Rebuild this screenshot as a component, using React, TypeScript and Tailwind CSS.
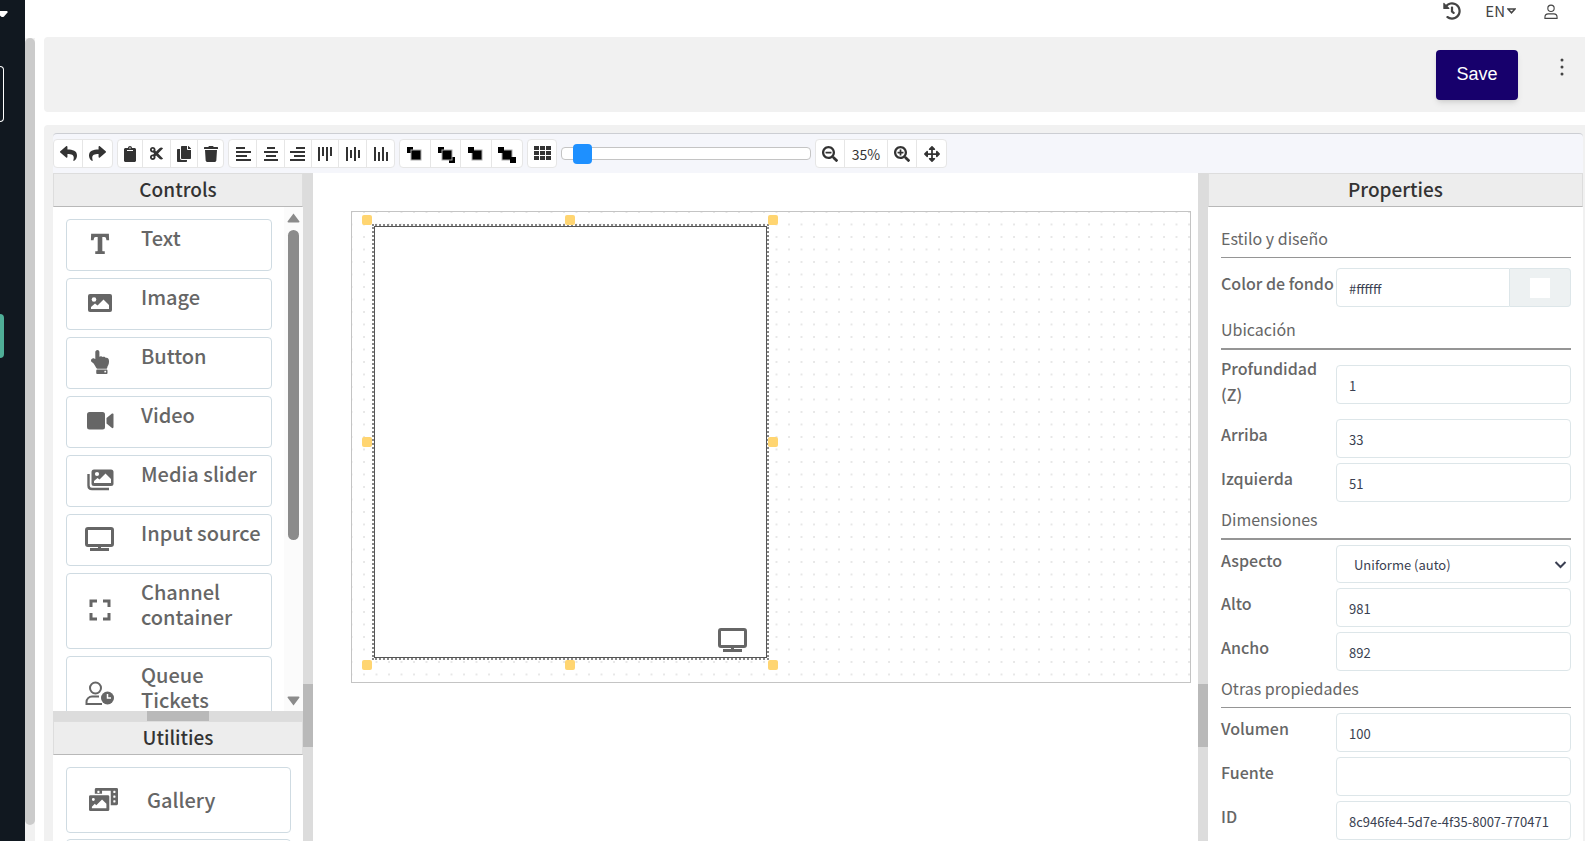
import type { ReactNode } from 'react'
import {
  FaReply, FaShare, FaClipboard, FaCut, FaCopy, FaTrash, FaSearchMinus, FaSearchPlus,
  FaArrowsAlt, FaHandPointUp, FaPhotoVideo, FaHistory,
} from 'react-icons/fa'
import { BsFonts } from 'react-icons/bs'
import { MdFullscreen } from 'react-icons/md'

interface Tool {
  label: string
  icon: ReactNode
  width: string
}

// Four bars, rotated for the vertical variants
function Bars({ lines, vertical }: { lines: [number, number][]; vertical?: boolean }) {
  return (
    <svg width="16" height="16" viewBox="0 0 16 16" fill="currentColor">
      {lines.map(([start, length], i) =>
        vertical ? (
          <rect key={i} x={1 + i * 4} y={start} width="2" height={length} />
        ) : (
          <rect key={i} x={start} y={1 + i * 4} width={length} height="2" />
        )
      )}
    </svg>
  )
}

function Layers({ squares }: { squares: [number, number, number][] }) {
  return (
    <svg width="20" height="18" viewBox="0 0 20 18">
      {squares.map(([x, y, size], i) => (
        <rect key={i} x={x} y={y} width={size} height={size} fill="#000" stroke="#aaa" strokeWidth={size > 6 ? 1 : 0} />
      ))}
    </svg>
  )
}

function GridIcon() {
  return (
    <svg width="17" height="15" viewBox="0 0 17 15" fill="currentColor">
      {[0, 5, 10].map((y) => [0, 6, 12].map((x) => <rect key={`${x}-${y}`} x={x} y={y} width="5" height="4" />))}
    </svg>
  )
}

function ImageIcon() {
  return (
    <svg width="24" height="18" viewBox="0 0 24 18">
      <rect width="24" height="18" rx="2" fill="currentColor" />
      <circle cx="6" cy="5.500" r="2.300" fill="#fff" />
      <path d="M3 15V13L7 9.500L9.500 11.500L15.500 5.500L21 11V15Z" fill="#fff" />
    </svg>
  )
}

function VideoIcon() {
  return (
    <svg width="27" height="18" viewBox="0 0 27 18" fill="currentColor">
      <rect width="18" height="17.500" rx="2.500" />
      <path d="M19.500 6L25 1.500Q26.500 1 26.500 2.500V15Q26.500 16.500 25 16L19.500 11.500Z" />
    </svg>
  )
}

function SlidesIcon() {
  return (
    <svg width="27" height="22" viewBox="0 0 27 22">
      <path d="M1.500 5V16.500Q1.500 20 5 20H22" fill="none" stroke="currentColor" strokeWidth="2.400" />
      <rect x="4.500" y="0.500" width="22" height="16.500" rx="2.500" fill="currentColor" />
      <circle cx="10" cy="5" r="2.100" fill="#fff" />
      <path d="M7 14V12L10.500 9L12.500 10.500L18.500 4.500L24 10V14Z" fill="#fff" />
    </svg>
  )
}

function MonitorIcon() {
  return (
    <svg width="30" height="25" viewBox="0 0 30 25" fill="none" stroke="currentColor">
      <rect x="1.500" y="1.500" width="26" height="17" rx="1.500" strokeWidth="3" />
      <path d="M14.500 19v4" strokeWidth="3" />
      <path d="M5 22.500h19" strokeWidth="3" />
    </svg>
  )
}

function QueueIcon() {
  return (
    <svg width="30" height="25" viewBox="0 0 30 25" fill="none" stroke="currentColor" strokeWidth="2">
      <circle cx="10.500" cy="7" r="5.500" />
      <path d="M14 15.500H7a5.500 5.500 0 0 0-5.500 5.500v2H17" />
      <circle cx="22.500" cy="17" r="6.500" fill="currentColor" stroke="none" />
      <path d="M22.500 13v4h3.500" stroke="#fff" strokeWidth="1.500" />
    </svg>
  )
}

const TOOL_GROUPS: Tool[][] = [
  [
    { label: 'Undo', icon: <FaReply size={17} />, width: 'w-[29px]' },
    { label: 'Redo', icon: <FaShare size={17} />, width: 'w-[29px]' },
  ],
  [
    { label: 'Paste', icon: <FaClipboard size={16} />, width: 'w-[25px]' },
    { label: 'Cut', icon: <FaCut size={15} />, width: 'w-7' },
    { label: 'Copy', icon: <FaCopy size={16} />, width: 'w-[27px]' },
    { label: 'Delete', icon: <FaTrash size={16} />, width: 'w-[25px]' },
  ],
  [
    { label: 'Align left', icon: <Bars lines={[[1, 9], [1, 15], [1, 11], [1, 15]]} />, width: 'w-7' },
    { label: 'Align center', icon: <Bars lines={[[4, 8], [1, 14], [3, 10], [1, 14]]} />, width: 'w-7' },
    { label: 'Align right', icon: <Bars lines={[[6, 9], [0, 15], [4, 11], [0, 15]]} />, width: 'w-[27px]' },
    { label: 'Align top', icon: <Bars vertical lines={[[1, 14], [1, 9], [1, 14], [1, 9]]} />, width: 'w-[27px]' },
    { label: 'Align middle', icon: <Bars vertical lines={[[1, 14], [4, 8], [1, 14], [4, 8]]} />, width: 'w-7' },
    { label: 'Align bottom', icon: <Bars vertical lines={[[1, 14], [6, 9], [1, 14], [6, 9]]} />, width: 'w-[27px]' },
  ],
  [
    { label: 'Bring to front', icon: <Layers squares={[[2, 2, 6], [6, 5, 10]]} />, width: 'w-[31px]' },
    { label: 'Bring forward', icon: <Layers squares={[[2, 2, 6], [13, 12, 6], [6, 5, 10]]} />, width: 'w-[30px]' },
    { label: 'Send to back', icon: <Layers squares={[[6, 5, 10], [2, 2, 6]]} />, width: 'w-[31px]' },
    { label: 'Send backward', icon: <Layers squares={[[5, 5, 10], [1, 2, 6], [13, 12, 6]]} />, width: 'w-[30px]' },
  ],
  [{ label: 'Toggle grid', icon: <GridIcon />, width: 'w-7' }],
]

const CONTROLS = [
  { label: 'Text', icon: <BsFonts size={30} stroke="currentColor" strokeWidth={1} /> },
  { label: 'Image', icon: <ImageIcon /> },
  { label: 'Button', icon: <FaHandPointUp size={24} /> },
  { label: 'Video', icon: <VideoIcon /> },
  { label: 'Media slider', icon: <SlidesIcon /> },
  { label: 'Input source', icon: <MonitorIcon /> },
  { label: 'Channel container', icon: <MdFullscreen size={36} />, tall: true },
  { label: 'Queue Tickets', icon: <QueueIcon />, tall: true },
]

const HANDLES = [
  '-left-[12px] -top-[11px]',
  'left-[191px] -top-[11px]',
  'left-[394px] -top-[11px]',
  '-left-[12px] top-[211px]',
  'left-[394px] top-[211px]',
  '-left-[12px] top-[434px]',
  'left-[191px] top-[434px]',
  'left-[394px] top-[434px]',
]

const FIELD =
  'h-[39px] w-full min-w-0 rounded border border-[#dde6e9] bg-white px-3 pt-[2px] text-[13px] text-[#3a3f51] outline-none'

function ToolGroup({ children }: { children: ReactNode }) {
  return (
    <div className="flex h-[29px] shrink-0 divide-x divide-[#e6e6e6] overflow-hidden rounded border border-[#e6e6e6] bg-white">
      {children}
    </div>
  )
}

function ToolButton({ label, icon, width }: Tool) {
  return (
    <button type="button" aria-label={label} className={`flex shrink-0 items-center justify-center ${width}`}>
      {icon}
    </button>
  )
}

function PanelTitle({ children }: { children: ReactNode }) {
  return (
    <h2 className="h-[34px] shrink-0 border border-[#ddd] border-b-[#b8b8b8] bg-[#ededed] text-center text-[19px] leading-[30px] font-medium text-[#333]">
      {children}
    </h2>
  )
}

function Splitter() {
  return (
    <div className="w-[10px] shrink-0 bg-[#dcdcdc] pt-[511px]">
      <div className="h-[63px] bg-[#b9b9b9]" />
    </div>
  )
}

function Section({ title, thick }: { title: string; thick?: boolean }) {
  return (
    <h3
      className={`mb-[5px] border-[#959595] pb-[7px] text-[16px] leading-6 text-[#666] ${thick ? 'border-b-2' : 'border-b'}`}
    >
      {title}
    </h3>
  )
}

function Row({ id, label, children, tall }: { id: string; label: string; children: ReactNode; tall?: boolean }) {
  return (
    <div className={`mb-[5px] flex ${tall ? 'h-[59px]' : ''}`}>
      <label
        htmlFor={id}
        className={`w-[115px] shrink-0 text-[16px] leading-[26px] font-medium text-[#666] ${tall ? '' : 'pt-[2px]'}`}
      >
        {label}
      </label>
      <div className={`flex min-w-0 flex-1 ${tall ? 'pt-[10px]' : ''}`}>{children}</div>
    </div>
  )
}

function Field({ id, label, value, tall }: { id: string; label: string; value: string; tall?: boolean }) {
  return (
    <Row id={id} label={label} tall={tall}>
      <input id={id} type="text" defaultValue={value} className={FIELD} />
    </Row>
  )
}

function Toolbar() {
  return (
    <div className="flex h-10 shrink-0 items-center gap-1 rounded-t border-t border-[#ccced3] bg-[#f5f6fb] text-[#333]">
      {TOOL_GROUPS.map((group, i) => (
        <ToolGroup key={i}>
          {group.map((tool) => (
            <ToolButton key={tool.label} {...tool} />
          ))}
        </ToolGroup>
      ))}
      <input
        type="range"
        aria-label="Zoom"
        min={0}
        max={100}
        defaultValue={5}
        className="h-[13px] w-[250px] shrink-0 appearance-none rounded border border-[#c4c4c4] bg-white [&::-webkit-slider-thumb]:h-5 [&::-webkit-slider-thumb]:w-[19px] [&::-webkit-slider-thumb]:appearance-none [&::-webkit-slider-thumb]:rounded [&::-webkit-slider-thumb]:bg-[#1e90ff]"
      />
      <ToolGroup>
        <ToolButton label="Zoom out" icon={<FaSearchMinus size={16} />} width="w-[29px]" />
        <span className="w-[43px] text-center text-[14px] leading-[28px]">35%</span>
        <ToolButton label="Zoom in" icon={<FaSearchPlus size={16} />} width="w-[29px]" />
        <ToolButton label="Move" icon={<FaArrowsAlt size={16} />} width="w-[29px]" />
      </ToolGroup>
    </div>
  )
}

function ControlsPanel() {
  return (
    <aside className="flex w-[250px] shrink-0 flex-col bg-white">
      <PanelTitle>Controls</PanelTitle>
      <div className="flex h-[504px] shrink-0 overflow-hidden">
        <div className="flex flex-1 flex-col gap-[7px] pt-3 pr-3 pl-[13px]">
          {CONTROLS.map(({ label, icon, tall }) => (
            <button
              key={label}
              type="button"
              className={`flex w-[206px] shrink-0 rounded border border-[#cfdbe2] text-left text-[#666] ${tall ? 'h-[76px]' : 'h-[52px]'}`}
            >
              <span className="flex h-full w-[66px] shrink-0 items-center justify-center pb-[2px]">{icon}</span>
              <span className="pt-[5px] pl-2 text-[20px] leading-[25px] font-medium">{label}</span>
            </button>
          ))}
        </div>
        <div className="flex w-[19px] shrink-0 flex-col items-center bg-[#fbfbfb] pt-[6px] pb-[5px] text-[#8b8b8b]">
          <svg width="13" height="10" viewBox="0 0 13 10" fill="currentColor">
            <path d="M6.500 0.500L12.500 8.500Q12.500 9.500 11.500 9.500H1.500Q0.500 9.500 0.500 8.500Z" />
          </svg>
          <div className="mt-[7px] h-[310px] w-[11px] rounded-full bg-[#8b8b8b]" />
          <svg className="mt-auto" width="13" height="10" viewBox="0 0 13 10" fill="currentColor">
            <path d="M6.500 9.500L12.500 1.500Q12.500 0.500 11.500 0.500H1.500Q0.500 0.500 0.500 1.500Z" />
          </svg>
        </div>
      </div>
      <div className="flex h-[10px] shrink-0 justify-center bg-[#dcdcdc]">
        <div className="w-[62px] bg-[#b9b9b9]" />
      </div>
      <PanelTitle>Utilities</PanelTitle>
      <div className="flex flex-col gap-[6px] pt-3 pr-3 pl-[13px]">
        <button
          type="button"
          className="flex h-[66px] shrink-0 items-center rounded border border-[#cfdbe2] pb-[2px] text-left text-[#666]"
        >
          <span className="flex w-[73px] justify-center">
            <FaPhotoVideo size={29} />
          </span>
          <span className="pl-[7px] text-[20px] leading-[25px] font-medium">Gallery</span>
        </button>
        <div className="h-[66px] shrink-0 rounded border border-[#cfdbe2]" />
      </div>
    </aside>
  )
}

function Canvas() {
  return (
    <main className="min-w-0 flex-1 bg-white pt-[38px] pr-[7px] pl-[38px]">
      <div className="relative h-[472px] border border-[#c4c4c4]">
        <svg className="absolute inset-0 h-full w-full">
          <defs>
            <pattern id="dots" x="11" y="-1" width="12.500" height="12.500" patternUnits="userSpaceOnUse">
              <circle cx="1" cy="1" r="0.800" fill="#c8c8c8" />
            </pattern>
          </defs>
          <rect width="100%" height="100%" fill="url(#dots)" />
        </svg>
        <div className="absolute top-3 left-5 h-[436px] w-[397px] border-2 border-dotted border-[#888]">
          <div className="flex h-full items-end justify-end border border-[#555] bg-white pr-[18px] pb-1 text-[#666]">
            <MonitorIcon />
          </div>
          {HANDLES.map((pos) => (
            <span key={pos} className={`absolute h-[10px] w-[10px] rounded-[2px] bg-[#ffd571] ${pos}`} />
          ))}
        </div>
      </div>
    </main>
  )
}

function PropertiesPanel() {
  return (
    <aside className="flex w-[375px] shrink-0 flex-col bg-white">
      <PanelTitle>Properties</PanelTitle>
      <form className="pt-[19px] pr-3 pl-[13px]">
        <Section title="Estilo y diseño" />
        <div className="py-[5px]">
          <Row id="background" label="Color de fondo">
            <input
              id="background"
              type="text"
              defaultValue="#ffffff"
              className="h-[39px] w-full min-w-0 rounded-l border border-[#dde6e9] px-3 pt-[2px] text-[13px] text-[#3a3f51] outline-none"
            />
            <button
              type="button"
              aria-label="Pick color"
              className="flex h-[39px] w-[61px] shrink-0 items-center justify-center rounded-r border border-l-0 border-[#dde6e9] bg-[#edf1f2]"
            >
              <span className="h-5 w-5 bg-white" />
            </button>
          </Row>
        </div>
        <Section title="Ubicación" thick />
        <Field id="depth" label="Profundidad (Z)" value="1" tall />
        <Field id="top" label="Arriba" value="33" />
        <Field id="left" label="Izquierda" value="51" />
        <Section title="Dimensiones" thick />
        <Row id="aspect" label="Aspecto">
          <div className="relative flex-1">
            <select
              id="aspect"
              className="h-[38px] w-full appearance-none rounded border border-[#dde6e9] bg-white px-[17px] pt-[2px] text-[13px] text-[#3a3f51] outline-none"
            >
              <option>Uniforme (auto)</option>
            </select>
            <svg
              className="pointer-events-none absolute top-4 right-1"
              width="13" height="8" viewBox="0 0 13 8" fill="none" stroke="#3a3f51" strokeWidth="2"
            >
              <path d="M1.500 1L6.500 6L11.500 1" />
            </svg>
          </div>
        </Row>
        <Field id="height" label="Alto" value="981" />
        <Field id="width" label="Ancho" value="892" />
        <Section title="Otras propiedades" />
        <Field id="volume" label="Volumen" value="100" />
        <Field id="source" label="Fuente" value="" />
        <Field id="uid" label="ID" value="8c946fe4-5d7e-4f35-8007-770471" />
      </form>
    </aside>
  )
}

export default function App() {
  return (
    <div className="flex h-screen overflow-hidden bg-white font-['Noto_Sans_CJK_SC','Noto_Sans',sans-serif]">
      <nav className="flex w-[25px] shrink-0 flex-col items-start bg-[#111820]">
        <svg className="mt-[11px]" width="8" height="6" viewBox="0 0 8 6" fill="#fff">
          <path d="M0 0H7Q8 0.500 7.500 1.500L4 5.500Q2.500 6.500 1 5.500L0 4.500Z" />
        </svg>
        <div className="mt-[49px] h-14 w-1 rounded-r border border-l-0 border-white" />
        <div className="mt-48 h-[44px] w-1 rounded-r bg-[#4fae97]" />
      </nav>
      <div className="mt-[38px] w-[10px] shrink-0 bg-[#f1f1f1] pb-4">
        <div className="h-full rounded-full bg-[#cbcbcb]" />
      </div>

      <div className="flex min-w-0 flex-1 flex-col pl-[9px]">
        <header className="flex h-[37px] shrink-0 items-start justify-end gap-6 pr-[27px] text-[#444]">
          <button type="button" aria-label="History" className="pt-[2px]">
            <FaHistory size={18} />
          </button>
          <button type="button" className="flex items-center gap-[2px] text-[15px] leading-[22px]">
            EN
            <svg width="9" height="6" viewBox="0 0 9 6" fill="none" stroke="currentColor" strokeWidth="1.500">
              <path d="M1 1H8L4.500 4.800Z" />
            </svg>
          </button>
          <button type="button" aria-label="Account" className="ml-1 pt-1">
            <svg width="14" height="16" viewBox="0 0 15 16" fill="none" stroke="currentColor" strokeWidth="1.200">
              <circle cx="7.500" cy="4" r="3.400" />
              <path d="M1 14.800V13.500Q1 10 4.500 10H10.500Q14 10 14 13.500V14.800Z" />
            </svg>
          </button>
        </header>

        <div className="flex h-[75px] shrink-0 items-start justify-end rounded-l bg-[#f1f1f1] pt-[13px]">
          <button
            type="button"
            className="h-[50px] w-[82px] rounded bg-[#17006c] pb-[2px] font-['Liberation_Sans',sans-serif] text-[18px] text-white shadow-md"
          >
            Save
          </button>
          <button type="button" aria-label="More" className="mr-[21px] ml-[42px] pt-2 text-[#444]">
            <svg width="4" height="18" viewBox="0 0 4 18" fill="currentColor">
              <circle cx="2" cy="2" r="1.500" />
              <circle cx="2" cy="9" r="1.500" />
              <circle cx="2" cy="16" r="1.500" />
            </svg>
          </button>
        </div>

        <div className="mt-[13px] flex min-h-0 flex-1 flex-col rounded-tl bg-[#f1f1f1] pt-2 pr-[2px] pl-[9px]">
          <Toolbar />
          <div className="flex min-h-0 flex-1 overflow-hidden">
            <ControlsPanel />
            <Splitter />
            <Canvas />
            <Splitter />
            <PropertiesPanel />
          </div>
        </div>
      </div>
    </div>
  )
}
